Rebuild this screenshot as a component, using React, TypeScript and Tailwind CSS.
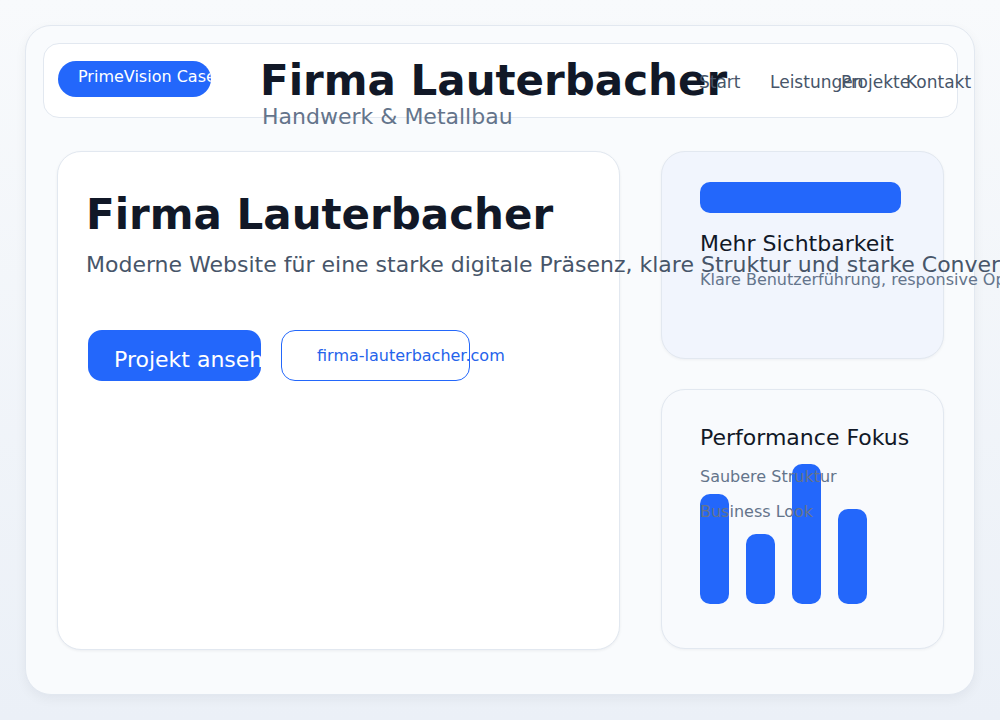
const navItems = [
  { label: 'Start', width: 'w-[71px]' },
  { label: 'Leistungen', width: 'w-[71px]' },
  { label: 'Projekte', width: 'w-[65px]' },
  { label: 'Kontakt', width: 'w-[70px]' },
];

const bars = ['h-[110px]', 'h-[70px]', 'h-[140px]', 'h-[95px]'];

function Header() {
  return (
    <header className="flex h-[75px] w-[915px] items-start rounded-[16px] border border-[#e2e8f0] bg-white pl-[14px] pt-[17px]">
      <div className="h-9 w-[153px] shrink-0 overflow-hidden whitespace-nowrap rounded-full bg-[#2367fb] pl-[20px] pt-[8px] text-[16px] leading-none text-white">
        PrimeVision Case
      </div>

      <div className="-mt-px ml-[49px] w-[439px] shrink-0 whitespace-nowrap">
        <h1 className="text-[42px] font-bold leading-none text-[#111827]">
          Firma Lauterbacher
        </h1>
        <p className="ml-[2px] mt-[4px] text-[22px] leading-none text-[#64748b]">
          Handwerk &amp; Metallbau
        </p>
      </div>

      <nav className="mt-[13px] flex whitespace-nowrap text-[17px] leading-none text-[#475569]">
        {navItems.map((item) => (
          <span key={item.label} className={`${item.width} shrink-0`}>
            {item.label}
          </span>
        ))}
      </nav>
    </header>
  );
}

function HeroCard() {
  return (
    <section className="h-[499px] w-[563px] shrink-0 rounded-[24px] border border-[#e2e8f0] bg-white pl-[30px] pt-[42px] shadow-[0_1px_3px_rgba(15,23,42,0.06)]">
      <h2 className="-ml-[2px] whitespace-nowrap text-[42px] font-bold leading-none text-[#111827]">
        Firma Lauterbacher
      </h2>
      <p className="relative z-10 -ml-[2px] mt-[18px] whitespace-nowrap text-[22px] leading-none text-[#475569]">
        Moderne Website für eine starke digitale Präsenz, klare Struktur und starke Conversion.
      </p>

      <div className="mt-[54px] flex gap-[20px]">
        <a
          href="#"
          className="h-[51px] w-[173px] shrink-0 overflow-hidden whitespace-nowrap rounded-[14px] bg-[#2367fb] pl-[26px] pt-[19px] text-[22px] leading-none text-white"
        >
          Projekt ansehen
        </a>
        <a
          href="#"
          className="h-[51px] w-[189px] shrink-0 whitespace-nowrap rounded-[14px] border-[1.5px] border-[#2367fb] pl-[35px] pt-[17px] text-[16px] leading-none text-[#2563eb]"
        >
          firma-lauterbacher.com
        </a>
      </div>
    </section>
  );
}

function SideCards() {
  return (
    <div className="ml-[41px] flex w-[283px] shrink-0 flex-col gap-[30px]">
      <div className="h-[208px] rounded-[24px] border border-[#e2e8f0] bg-[#f1f5fd] pl-[38px] pt-[30px] shadow-[0_1px_3px_rgba(15,23,42,0.05)]">
        <div className="h-[31px] w-[201px] rounded-[10px] bg-[#2367fb]" />
        <h3 className="mt-[20px] whitespace-nowrap text-[22px] leading-none text-[#111827]">
          Mehr Sichtbarkeit
        </h3>
        <p className="mt-[17px] whitespace-nowrap text-[16px] leading-none text-[#64748b]">
          Klare Benutzerführung, responsive Optik und schnelle Ladezeiten.
        </p>
      </div>

      <div className="h-[260px] rounded-[24px] border border-[#e2e8f0] bg-[#f8fafd] pl-[38px] pt-[37px] shadow-[0_1px_3px_rgba(15,23,42,0.05)]">
        <h3 className="whitespace-nowrap text-[22px] leading-none text-[#111827]">
          Performance Fokus
        </h3>
        <p className="relative z-10 mt-[20px] whitespace-nowrap text-[16px] leading-none text-[#64748b]">
          Saubere Struktur
        </p>
        <p className="relative z-10 mt-[19px] whitespace-nowrap text-[16px] leading-none text-[#64748b]">
          Business Look
        </p>
        <div className="-mt-[56px] flex h-[140px] items-end gap-[17px]">
          {bars.map((height, i) => (
            <div key={i} className={`${height} w-[29px] rounded-[10px] bg-[#2367fb]`} />
          ))}
        </div>
      </div>
    </div>
  );
}

export default function App() {
  return (
    <div className="h-[720px] w-[1000px] overflow-hidden bg-linear-to-b from-[#f8fafc] to-[#ebf0f7] p-[25px] font-['DejaVu_Sans',sans-serif]">
      <div className="h-[670px] w-[950px] rounded-[26px] border border-[#e2e8f0] bg-[#f9fbfd] pl-[17px] pt-[17px] shadow-[0_4px_12px_rgba(15,23,42,0.05)]">
        <Header />
        <main className="ml-[14px] mt-[33px] flex">
          <HeroCard />
          <SideCards />
        </main>
      </div>
    </div>
  );
}
